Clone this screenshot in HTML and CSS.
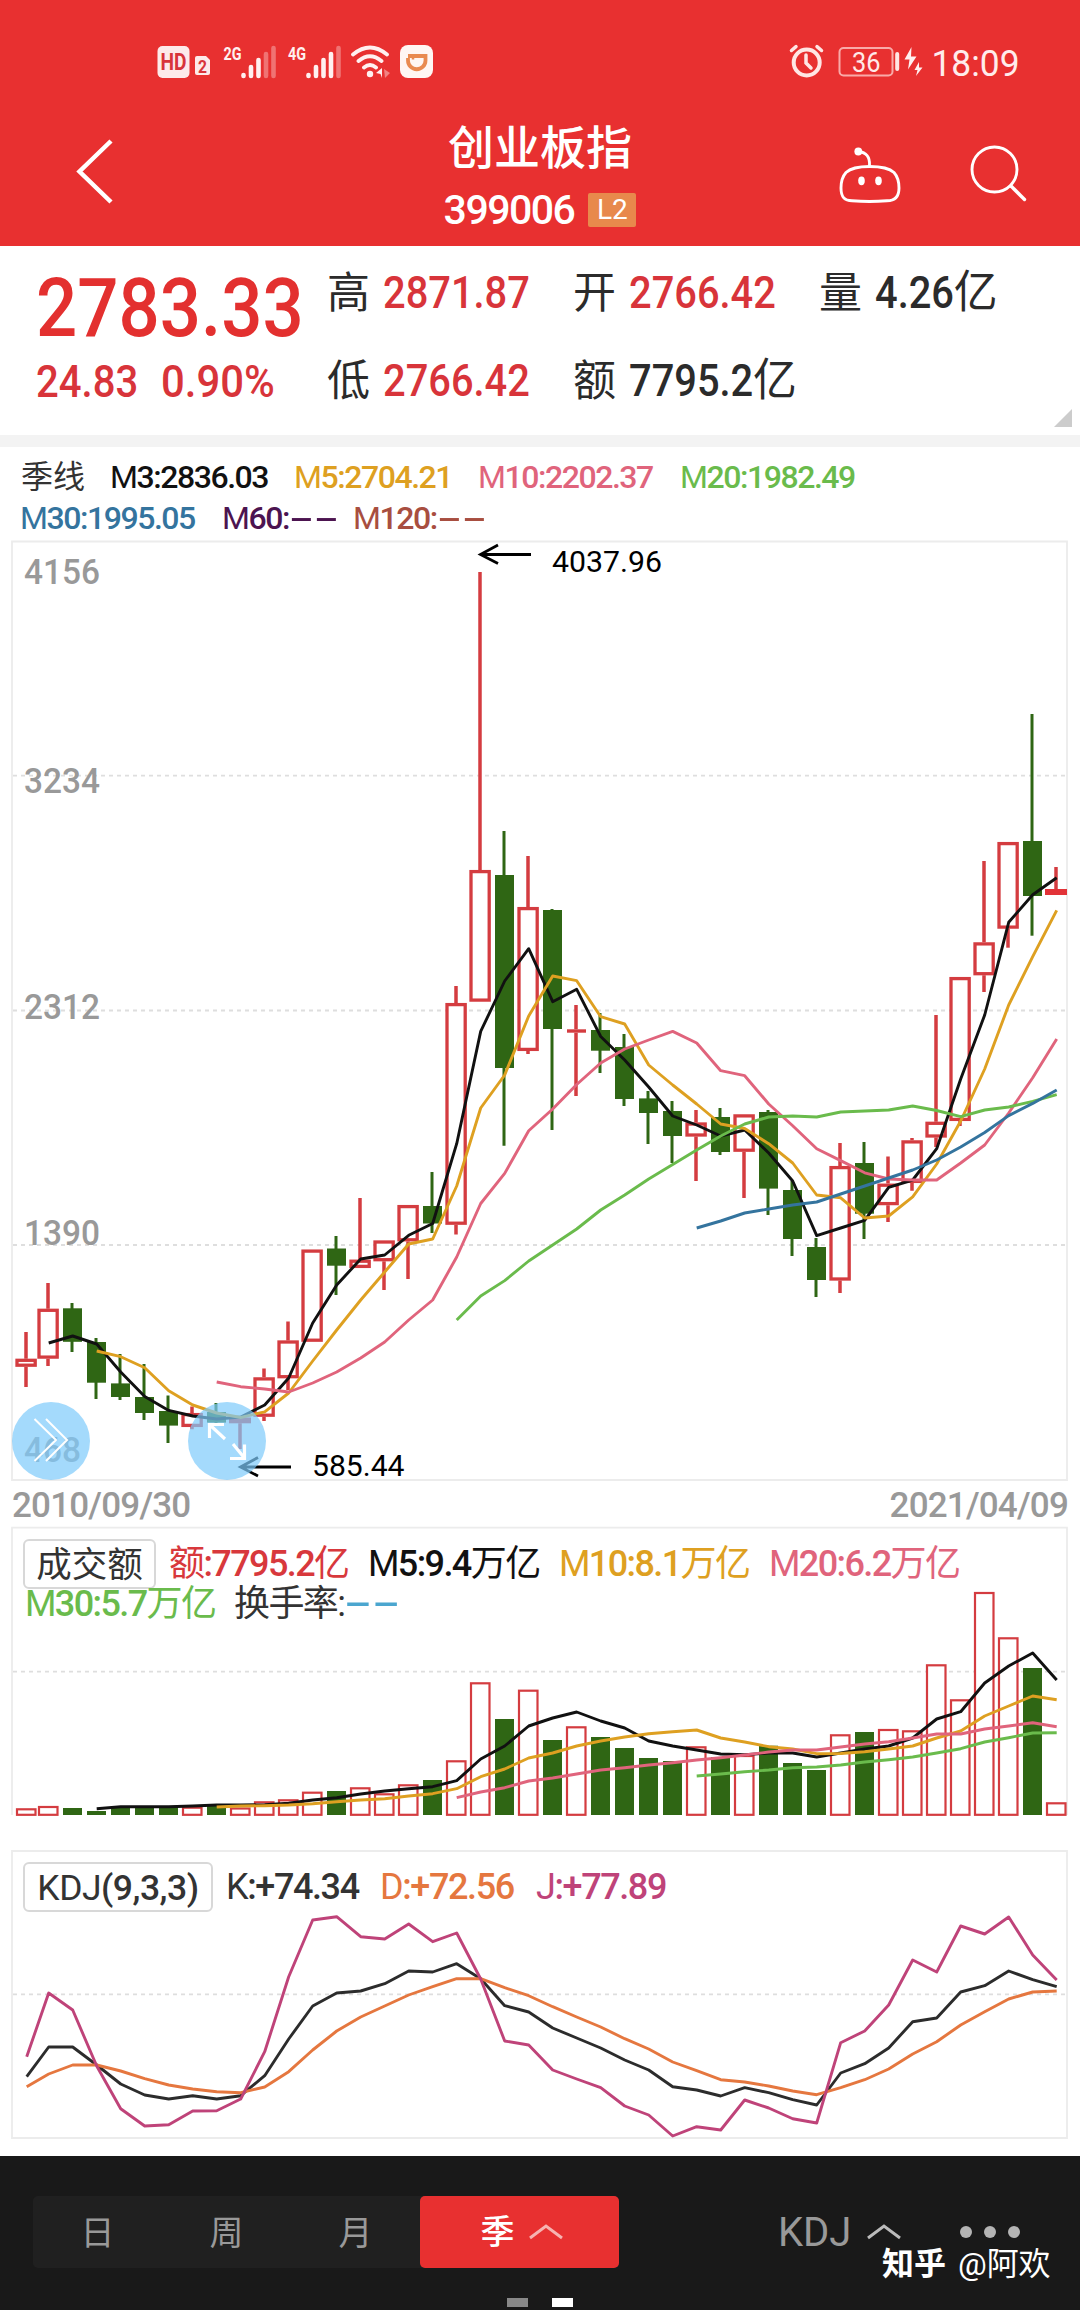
FILE: index.html
```html
<!DOCTYPE html>
<html lang="zh-CN">
<head>
<meta charset="utf-8">
<title>创业板指 399006</title>
<link rel="stylesheet" href="styles.css">
</head>
<body>
<header class="header">
  <div class="status">
    <svg width="278" height="40" viewBox="157 42 278 40">
      <rect x="157.500" y="46" width="32" height="32" rx="5" fill="#fdeaea"/>
      <text x="160.500" y="70" class="hd" textLength="26" lengthAdjust="spacingAndGlyphs">HD</text>
      <path d="M197 56h9l4 4v13a2 2 0 0 1-2 2h-11a2 2 0 0 1-2-2V58a2 2 0 0 1 2-2z" fill="#fdeaea"/>
      <text x="198" y="72.500" class="sim" textLength="9" lengthAdjust="spacingAndGlyphs">2</text>
      <text x="223.500" y="59.500" class="net" textLength="18" lengthAdjust="spacingAndGlyphs">2G</text>
      <text x="288" y="59.500" class="net" textLength="18" lengthAdjust="spacingAndGlyphs">4G</text>
      <g stroke="#fff0f0" stroke-width="4.600" stroke-linecap="round">
        <path d="M243.500 75v1M251 67v9M258.500 60v16"/>
        <path d="M266 54v22M273.500 48v28" opacity=".35"/>
        <path d="M308.500 75v1M316 67v9M323.500 60v16M331 54v22"/>
        <path d="M338.500 48v28" opacity=".35"/>
      </g>
      <g fill="none" stroke="#fff0f0" stroke-width="3.800" stroke-linecap="round">
        <path d="M353 54.500q17-14 34 0M358.500 61q11.500-9.500 23 0M364 67.500q6-5 12 0"/>
      </g>
      <circle cx="370" cy="74" r="3.200" fill="#fff0f0"/>
      <path d="M376 73l6-5v10l-1.500-4z" fill="#fff0f0"/>
      <path d="M384 69l6 4-5 5z" fill="#fff" opacity=".4"/>
      <rect x="400" y="45" width="33" height="33" rx="8" fill="#fff6f3"/>
      <path d="M408 56h17.500v4.500a8.700 8.700 0 0 1-17.500 0V58" fill="none" stroke="#e98a50" stroke-width="3.800"/>
      <path d="M413 54.500v5" stroke="#e98a50" stroke-width="2.500"/>
    </svg>
    <svg class="status-right" width="240" height="40" viewBox="789 42 240 40">
      <g fill="none" stroke="#ffe6e4" stroke-linecap="round">
        <circle cx="806.700" cy="62.500" r="13" stroke-width="4"/>
        <path d="M806 55v8l5 5" stroke-width="3.500"/>
        <path d="M791.500 50.500l4.500-3.800M821.500 50.500l-4.500-3.800" stroke-width="3.500"/>
        <rect x="839.500" y="48" width="53" height="27.500" rx="4" stroke="#f9aaa8" stroke-width="2"/>
        <path d="M897.200 54v15" stroke-width="4"/>
      </g>
      <text x="852" y="71.500" class="battery" textLength="28.500" lengthAdjust="spacingAndGlyphs">36</text>
      <path d="M911.500 47l-7 12.500h5l-1.500 10 8.500-13h-5.500z" fill="#fff0f0"/>
      <path d="M919 62l-4.500 8h3l-1.500 6 6.500-8.500h-3.500z" fill="#fff0f0"/>
      <text x="931.500" y="76" class="clock" textLength="88" lengthAdjust="spacingAndGlyphs">18:09</text>
    </svg>
  </div>
  <div class="titlebar">
    <svg class="back" width="40" height="66" viewBox="75 138 40 66"><path d="M111 141L79.500 171.500 111 202" fill="none" stroke="#fff" stroke-width="4.500"/></svg>
    <div class="title">
      <h1>创业板指</h1>
      <div class="code"><span>399006</span><b>L2</b></div>
    </div>
    <svg class="actions" width="190" height="60" viewBox="838 145 190 60">
      <g fill="none" stroke="#fff" stroke-width="2.900" stroke-linecap="round">
        <path d="M869.500 166.500c12 0 20 1.800 24.500 6 4 4.500 5 10 5 15.500 0 9-4 12.800-12 12.800-11 .8-24 .8-35 0-8 0-11-3.800-11-12.800 0-5.500 1-11 5-15.500 4.500-4.200 11.500-6 23.500-6z"/>
        <path d="M858.500 151.500c8 1 11.500 5 11 14"/>
        <circle cx="994.500" cy="169.500" r="22.500"/>
        <path d="M1011 186l13.500 13.500" stroke-width="3.400"/>
      </g>
      <circle cx="858.300" cy="151.500" r="3.900" fill="#fff"/>
      <ellipse cx="861.500" cy="180.800" rx="3.300" ry="4.400" fill="#fff"/>
      <ellipse cx="878.500" cy="180.800" rx="3.300" ry="4.400" fill="#fff"/>
    </svg>
  </div>
</header>

<section class="quote">
  <div class="price"><span>2783.33</span></div>
  <div class="cell up"><i>高</i><span>2871.87</span></div>
  <div class="cell up"><i>开</i><span>2766.42</span></div>
  <div class="cell"><i>量</i><span>4.26<em>亿</em></span></div>
  <div class="change"><span>24.83</span><span>0.90%</span></div>
  <div class="cell up"><i>低</i><span>2766.42</span></div>
  <div class="cell"><i>额</i><span>7795.2<em>亿</em></span></div>
  <div class="corner"></div>
</section>

<section class="averages">
  <div class="row"><span class="period">季线</span><span class="c-black w157"><i>M</i>3:2836.03</span><span class="c-gold w157"><i>M</i>5:2704.21</span><span class="c-pink w174"><i>M</i>10:2202.37</span><span class="c-green"><i>M</i>20:1982.49</span></div>
  <div class="row"><span class="c-blue w174"><i>M</i>30:1995.05</span><span class="c-purple w104"><i>M</i>60:<u>--</u></span><span class="c-brown"><i>M</i>120:<u>--</u></span></div>
</section>

<section class="panel main">
  <svg id="candles" width="1080" height="942" viewBox="0 540 1080 942"></svg>
</section>
<div class="dates"><span>2010/09/30</span><span>2021/04/09</span></div>

<section class="panel volume">
  <svg id="volume" width="1080" height="294" viewBox="0 1526 1080 294"></svg>
  <div class="legend">
    <div class="row"><span class="box">成交额</span><span class="c-red v-amount"><i>额</i>:7795.2<i>亿</i></span><span class="c-black v-m5"><i>M</i>5:9.4<i>万亿</i></span><span class="c-gold v-m10"><i>M</i>10:8.1<i>万亿</i></span><span class="c-pink"><i>M</i>20:6.2<i>万亿</i></span></div>
    <div class="row second"><span class="c-green v-m30"><i>M</i>30:5.7<i>万亿</i></span><span class="c-dark"><i>换手率:</i><u class="c-sky">--</u></span></div>
  </div>
</section>

<section class="panel kdj">
  <svg id="kdj" width="1080" height="292" viewBox="0 1849 1080 292"></svg>
  <div class="legend">
    <div class="row"><span class="box kbox"><i>KDJ</i>(9,3,3)</span><span class="c-dark k-k"><i>K</i>:+74.34</span><span class="c-orange k-d"><i>D</i>:+72.56</span><span class="c-magenta"><i>J</i>:+77.89</span></div>
  </div>
</section>

<footer class="footer">
  <nav class="toolbar">
    <div class="tabs"><span>日</span><span>周</span><span>月</span>
      <span class="active">季<svg width="36" height="18" viewBox="0 0 36 18"><path d="M2 15L18 3l16 12" fill="none" stroke="#f6b3b1" stroke-width="3"/></svg></span>
    </div>
    <div class="indicator">KDJ<svg width="36" height="18" viewBox="0 0 36 18"><path d="M2 15L18 3l16 12" fill="none" stroke="#bbb" stroke-width="3"/></svg></div>
    <svg class="more" width="62" height="14" viewBox="0 0 62 14" fill="#b4b4b4"><circle cx="7" cy="7" r="6"/><circle cx="31" cy="7" r="6"/><circle cx="55" cy="7" r="6"/></svg>
  </nav>
  <div class="pager"><span></span><span class="on"></span></div>
  <div class="watermark"><b>知乎</b><span>@阿欢</span></div>
</footer>
<script src="chart.js"></script>
</body>
</html>
```

FILE: styles.css
```css
* { box-sizing: border-box; }
body {
  margin: 0;
  width: 1080px;
  height: 2310px;
  overflow: hidden;
  background: #fff;
  color: #2b2b2b;
  font-family: Roboto, "Noto Sans CJK SC", sans-serif;
}
i, em { font-style: normal; }
u { text-decoration: none; }
svg { display: block; }

/* header */
.header { height: 246px; background: #e83030; color: #fff; }
.status { display: flex; justify-content: space-between; padding: 42px 51px 0 157px; }
.status text { font-family: Roboto, sans-serif; }
.hd { font-size: 23px; font-weight: 700; fill: #d8343a; }
.sim { font-size: 18px; font-weight: 700; fill: #d8343a; }
.net { font-size: 19px; font-weight: 700; fill: #fff0f0; }
.battery { font-size: 27px; fill: #ffe9e8; }
.clock { font-size: 37px; fill: #ffecec; }
.titlebar {
  display: grid;
  grid-template-columns: 290px 350px 1fr;
  padding-left: 75px;
  height: 164px;
}
.back { margin-top: 56px; }
.title { text-align: center; }
.title h1 { margin: 38px 0 0; font-size: 46px; line-height: 56px; font-weight: 500; }
.code { display: flex; justify-content: center; align-items: center; gap: 14px; margin-top: 17px; height: 34px; }
.code span { font-size: 41px; line-height: 34px; font-weight: 500; letter-spacing: -1.5px; }
.code b { width: 48px; height: 34px; background: #e8894c; border-radius: 2px; font-size: 28px; line-height: 34px; font-weight: 400; }
.actions { margin: 63px 0 0 123px; }

/* quote */
.quote {
  position: relative;
  display: grid;
  grid-template-columns: 291px 246px 246px 1fr;
  grid-template-rows: 89px 88px;
  height: 201px;
  padding: 2px 0 0 36px;
  border-bottom: 12px solid #f3f3f3;
  align-items: center;
}
.price { color: #e3302f; font-size: 82px; line-height: 89px; font-weight: 500; padding-top: 31px; }
.price span { display: inline-block; transform: scaleX(.885); transform-origin: 0 50%; }
.change { display: flex; color: #d8343a; font-size: 45px; font-weight: 500; }
.change span { width: 125px; transform: scaleX(.89); transform-origin: 0 50%; white-space: nowrap; }
.change span + span { transform: scaleX(.93); }
.cell { display: flex; align-items: center; height: 60px; font-size: 45px; line-height: 60px; font-weight: 500; }
.cell i { width: 56px; font-size: 43px; font-weight: 400; }
.cell span { transform: scaleX(.885); transform-origin: 0 50%; white-space: nowrap; }
.cell em { display: inline-block; font-weight: 400; transform: scaleX(1.1); transform-origin: 0 50%; }
.up span { color: #d8343a; }
.corner { position: absolute; right: 8px; top: 163px; border-style: solid; border-width: 0 0 18px 18px; border-color: transparent transparent #ccc transparent; }

/* moving averages */
.averages { height: 93px; padding: 10px 0 0 21px; }
.averages .row { display: flex; height: 41px; line-height: 41px; font-size: 32px; font-weight: 500; letter-spacing: -1.45px; white-space: nowrap; }
.row i { font-weight: 400; }
.row u { display: inline-block; transform: scaleX(2.3); transform-origin: 0 50%; letter-spacing: 0; }
.averages .period { width: 89px; letter-spacing: 0; color: #333; font-weight: 400; }
.w157 { width: 184px; }
.w174 { width: 202px; }
.averages .w174:first-child { margin-left: -1px; }
.w104 { width: 131px; }

.c-black { color: #111; }
.c-dark { color: #333; }
.c-gold { color: #dea021; }
.c-pink { color: #e0647c; }
.c-green { color: #6abb4c; }
.c-blue { color: #34749e; }
.c-purple { color: #4c1450; }
.c-brown { color: #a84e40; }
.c-red { color: #d8383c; }
.c-sky { color: #4ba6cf; }
.c-orange { color: #e5773f; }
.c-magenta { color: #bf4379; }

/* chart panels */
.panel { display: grid; }
.panel > * { grid-area: 1 / 1; }
.main { height: 942px; }
.axis { font: 500 35px Roboto, sans-serif; fill: #999; }
.note { font: 400 29px Roboto, sans-serif; fill: #000; }
.dates { display: flex; justify-content: space-between; height: 44px; padding: 2px 12px 0 12px; color: #999; font-size: 35px; line-height: 44px; font-weight: 500; letter-spacing: -.8px; }
.volume { height: 294px; }
.kdj { height: 292px; margin-top: 29px; }
.legend { padding: 13px 0 0 23px; z-index: 1; }
.legend .row { display: flex; align-items: center; height: 50px; font-size: 36px; line-height: 54px; font-weight: 500; letter-spacing: -1.6px; white-space: nowrap; }
.legend .second { height: 30px; padding-left: 2px; }
.box { width: 133px; height: 50px; margin-right: 13px; border: 2px solid #d8d8d8; border-radius: 6px; color: #333; font-size: 35.500px; line-height: 48px; text-align: center; letter-spacing: 0; font-weight: 400; }
.v-amount { width: 199px; }
.v-m5 { width: 191px; }
.v-m10 { width: 210px; }
.v-m30 { width: 209px; }
.kbox { width: 190px; font-weight: 500; letter-spacing: -.5px; }
.k-k { width: 154px; }
.k-d { width: 156px; }
.kdj .row { letter-spacing: -1.4px; }
.kdj .kbox { letter-spacing: -.5px; }

/* bottom bar */
.footer { position: relative; height: 154px; margin-top: 15px; background: #191919; color: #999; }
.toolbar { display: flex; align-items: center; padding: 40px 0 0 33px; }
.tabs { display: flex; width: 586px; height: 72px; background: #202020; border-radius: 5px; font-size: 34px; line-height: 74px; }
.tabs span { width: 129px; text-align: center; }
.tabs .active { display: flex; justify-content: center; align-items: center; gap: 13px; width: 199px; padding-left: 5px; background: #e83030; color: #fff; border-radius: 5px; font-weight: 500; }
.indicator { display: flex; align-items: center; gap: 15px; margin-left: 159px; font-size: 40px; }
.more { margin-left: 57px; }
.pager { display: flex; gap: 24px; margin: 30px 0 0 507px; }
.pager span { width: 21px; height: 9px; background: #888; }
.pager .on { background: #fff; }
.watermark { position: absolute; left: 882px; top: 88px; display: flex; gap: 12px; color: #fff; font-size: 32px; line-height: 40px; white-space: nowrap; }
.watermark span { font-size: 32px; letter-spacing: -.1px; }
```

FILE: chart.js
```js
const NS = 'http://www.w3.org/2000/svg';
const RED = '#d43c40', GREEN = '#2f6614';
const x = i => (i === 0 ? 26 : 24 + 24 * i);

function add(svg, name, attrs, text) {
  const el = document.createElementNS(NS, name);
  for (const k in attrs) el.setAttribute(k, attrs[k]);
  if (text) el.textContent = text;
  svg.appendChild(el);
}
const path = (svg, d, stroke, width, extra) =>
  add(svg, 'path', Object.assign({ d, fill: 'none', stroke, 'stroke-width': width }, extra));
function line(svg, start, ys, color) {
  path(svg, 'M' + ys.map((y, k) => (x(start + k) + .7) + ' ' + y).join('L'), color, 2.9, { 'stroke-linejoin': 'round' });
}
function grid(svg, y) { path(svg, `M13 ${y}H1066`, '#dedede', 1.8, { 'stroke-dasharray': '4 4' }); }
function label(svg, s, lx, y, w, cls) {
  add(svg, 'text', { x: lx, y, class: cls, textLength: w, lengthAdjust: 'spacingAndGlyphs' }, s);
}

/* quarterly candles: direction, high, body top, body bottom, low */
const candles = [
  ['r',1332,1358.7,1366.8,1387],['r',1283,1308.7,1358.7,1366],['g',1303,1308.3,1341.8,1352],['g',1338,1342,1382.7,1399],
  ['g',1354,1383.4,1397,1400],['g',1364,1397,1413,1420],['g',1395.5,1411,1425.6,1443],['r',1406.4,1413,1427,1429.3],
  ['g',1403,1412,1422.6,1425.3],['r',1416.5,1417.5,1423.3,1449],['r',1368.5,1377.3,1416.8,1421],['r',1321.5,1340.4,1378.3,1390],
  ['r',1249.5,1249.5,1341.8,1341.8],['g',1236,1248.5,1265.7,1295],['r',1198,1259.6,1268,1268],['r',1240.4,1240.4,1261.3,1290],
  ['r',1205,1205,1241.4,1279],['g',1172,1206,1223.5,1233],['r',986,1003,1224.8,1234.6],['r',572,870,1001.7,1001.7],
  ['g',831,875,1068,1145.7],['r',856,907,1051,1054],['g',909,910,1029,1130],['r',1005,1029.3,1032.7,1096],
  ['g',1013,1030,1050.7,1073],['g',1034,1047,1099,1106],['g',1091,1098.4,1113,1144],['g',1101,1111,1136,1163],
  ['r',1110,1122.4,1136.6,1181],['g',1108,1117,1152,1155],['r',1114.3,1114.3,1151.8,1198],['g',1110,1112,1188.6,1215],
  ['g',1181,1190,1239,1256],['g',1238,1247,1280,1297],['r',1143,1166,1280.6,1293],['g',1142,1163,1213.7,1239],
  ['r',1156.5,1183.6,1205.2,1222],['r',1138,1140.3,1183,1190.7],['r',1015,1121.7,1137.6,1147],['r',977,977,1121,1126],
  ['r',861,942.3,975.3,992],['r',842,842,928.7,947.7],['g',714,841,896,935.7],['r',867,889,895,895]
];
const main = document.getElementById('candles');
path(main, 'M12 541.500H1067V1480H12Z', '#ececec', 1.8);
[775.7, 1010.5, 1245].forEach(y => grid(main, y));
[['4156', 584], ['3234', 793], ['2312', 1019], ['1390', 1245]].forEach(a => label(main, a[0], 24, a[1], 76, 'axis'));
label(main, '468', 24, 1462, 57, 'axis');
candles.forEach(([c, hi, top, bot, lo], i) => {
  const cx = x(i);
  if (c === 'g') {
    path(main, `M${cx} ${hi}V${lo}`, GREEN, 3);
    add(main, 'rect', { x: cx - 9, y: top, width: 19, height: bot - top, fill: GREEN });
  } else {
    path(main, `M${cx} ${hi}V${top}M${cx} ${bot}V${lo}`, RED, 3.5);
    if (bot - top < 6.5) add(main, 'rect', { x: cx - (i === 23 ? 9 : 11), y: top, width: i === 23 ? 19 : 22, height: bot - top, fill: i === 43 ? '#e23338' : RED });
    else add(main, 'rect', { x: cx - 9, y: top + 1.6, width: 18.2, height: bot - top - 3.2, fill: '#fff', stroke: RED, 'stroke-width': 3.3 });
  }
});
line(main, 1, [1343,1336,1344,1372,1396.6,1410.4,1416,1419,1417,1405,1378,1323,1285,1259,1255,1235.3,1223.5,1143.7,1031.4,981,948.7,1001.7,989.3,1036.5,1060,1087,1116,1125,1136,1130,1153,1181,1235.6,1228,1220.4,1187.3,1180,1148.7,1079,1015,922.3,894.7,877.7], '#111');
line(main, 3, [1351,1356.7,1367.8,1390.8,1405,1413,1417.5,1411.8,1393,1361,1330,1300,1272,1244,1239,1186,1108,1075,1016,976,980.7,1016.7,1024,1065,1085,1104,1124,1128.5,1143.7,1163,1195,1197.8,1218,1216,1196.8,1164,1121,1069,1005,956.7,910.3], '#dea021');
line(main, 8, [1382,1386.7,1389,1392,1383,1372,1358,1342,1320,1300,1257,1203.5,1173.4,1130.8,1109,1084.5,1063,1049,1040,1031.4,1043,1070.7,1075.7,1104,1125.8,1148.7,1160.6,1172.8,1179,1180,1180,1163,1145,1113,1077.8,1039], '#e0647c');
line(main, 18, [1320,1296,1280.6,1261,1245,1229,1210,1195,1179,1164.6,1150,1136,1124,1117,1116,1117,1112,1111,1110,1106,1110.5,1116.6,1110,1107,1101.4,1094.7], '#6abb4c');
line(main, 28, [1228,1221,1213,1209,1205,1202,1194,1186,1178,1170,1160,1147,1132.5,1115.6,1103.4,1090], '#34749e');
path(main, 'M531 554.500H481M498 545L480.500 554.500 498 563.500', '#000', 2.8);
path(main, 'M291 1467H241M258 1457.500L240.500 1467 258 1476', '#000', 2.8);
label(main, '4037.96', 552, 571.7, 110, 'note');
label(main, '585.44', 312, 1476, 92.5, 'note');
/* floating round buttons */
[51, 227].forEach(cx => add(main, 'circle', { cx, cy: 1441, r: 39, fill: '#7ecbfb', opacity: .7 }));
path(main, 'M34.500 1419L56 1440 34.500 1461M46 1419L67 1440 46 1461', '#fff', 2);
path(main, 'M225 1439L210 1425M209.500 1438V1424.500H224M233 1444L244 1457.500M244.500 1444.500V1458.500H230', '#fff', 3.2);

/* turnover columns share the candle directions */
const tops = [1808.3,1806,1808,1811,1807,1807,1807,1806.7,1805.7,1807.5,1801.3,1799.3,1791.7,1791,1787.3,1793.3,1784.3,1780,1760.3,1682.3,1719,1689.7,1740,1726.3,1737,1748,1758,1761,1746.3,1757,1755,1745.7,1763,1770,1734.3,1732,1729,1730.3,1664.3,1699.3,1592,1637.3,1668,1802.3];
const vol = document.getElementById('volume');
path(vol, 'M12 1815V1527.700H1067V1815', '#ececec', 1.8);
grid(vol, 1671.7);
tops.forEach((t, i) => {
  const cx = x(i);
  if (candles[i][0] === 'g') add(vol, 'rect', { x: cx - 9, y: t, width: 19, height: 1815 - t, fill: GREEN });
  else add(vol, 'rect', { x: cx - 9, y: t + 1, width: 18.5, height: 1813.8 - t, fill: '#fff', stroke: RED, 'stroke-width': 2.2 });
});
line(vol, 3, [1808.7,1806.7,1806.7,1806.7,1806,1805,1805,1804.7,1803.3,1800,1797.7,1794,1791,1788.7,1786.7,1780.7,1759,1746,1726,1718,1712,1721,1728,1741,1746,1750,1754,1754.7,1753,1753,1757,1753,1749,1746,1738,1719,1711.7,1683,1666,1653,1680], '#111');
line(vol, 8, [1807,1806,1805.7,1805,1803.7,1801.7,1800,1798.7,1796,1793.7,1788.7,1776.7,1769,1758,1753,1746,1741,1737,1733.7,1731.7,1730,1738,1742,1746.7,1749,1753.7,1753.5,1751.7,1749,1746,1738,1731,1716,1706,1696,1699.7], '#dea021');
line(vol, 18, [1797.7,1792,1787.7,1781,1778,1774,1770,1767.7,1765,1762.7,1760,1757.7,1755,1752,1750,1750,1747,1744,1741.7,1738,1734,1734,1729,1726,1722.7,1726.7], '#e0647c');
line(vol, 28, [1776,1774,1771.7,1770,1767.7,1767,1765,1762,1759.7,1757,1753,1748.7,1742,1737.7,1733,1732.7], '#6abb4c');

const kdj = document.getElementById('kdj');
path(kdj, 'M12 1851H1067V2138H12Z', '#ececec', 1.8);
grid(kdj, 1994.3);
line(kdj, 0, [2076.7,2047,2047,2065,2084,2095,2099,2095.7,2099,2095.7,2075.7,2039,2006,1993,1991,1983.7,1971,1972,1963.7,1978.7,2005.7,2012,2028,2038,2048,2060,2070,2086.7,2090,2096,2087.7,2092.7,2099.7,2105,2073,2063.7,2048,2021.7,2018,1992,1985.7,1971,1979.7,1986.7], '#2c2c2c');
line(kdj, 0, [2086.7,2074,2065,2065,2071,2078.7,2085,2089,2091.7,2092.7,2087,2071.7,2050,2031,2017,2006,1995,1986.7,1978.7,1978.7,1987.7,1995.7,2006.7,2017,2027,2038.7,2049,2062,2070.7,2079.7,2082,2086,2091,2094.7,2087.7,2079.7,2069,2054,2041.7,2025,2011.7,1999,1992,1991], '#e5773f');
line(kdj, 0, [2056.7,1993,2010,2066,2108.7,2126,2124.7,2111,2110.7,2099,2051.7,1976.7,1920,1916.7,1936.7,1939,1924,1941.7,1933,1979,2041,2045,2070,2079,2087.7,2106,2115,2136,2126.7,2130,2100,2108,2118.7,2123,2042.7,2031,2005,1960,1972,1926,1934,1917,1955,1980], '#bf4379');
```
